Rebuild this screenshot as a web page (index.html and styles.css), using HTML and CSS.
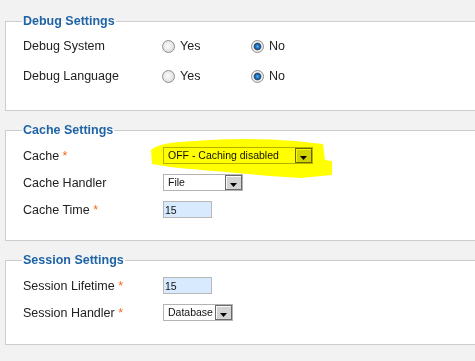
FILE: index.html
```html
<!DOCTYPE html>
<html>
<head>
<meta charset="utf-8">
<link rel="stylesheet" href="styles.css">
</head>
<body>
<div class="page">
  <fieldset class="panel panel-debug">
    <legend>Debug Settings</legend>
    <div class="row">
      <span class="label">Debug System</span>
      <div class="radios">
        <label class="opt"><input type="radio" name="debug_system">Yes</label>
        <label class="opt"><input type="radio" name="debug_system" checked>No</label>
      </div>
    </div>
    <div class="row">
      <span class="label">Debug Language</span>
      <div class="radios">
        <label class="opt"><input type="radio" name="debug_lang">Yes</label>
        <label class="opt"><input type="radio" name="debug_lang" checked>No</label>
      </div>
    </div>
  </fieldset>

  <fieldset class="panel panel-cache">
    <legend>Cache Settings</legend>
    <div class="row">
      <span class="label">Cache <span class="req">*</span></span>
      <div class="select select-cache"><span class="select-value">OFF - Caching disabled</span><span class="select-btn"><svg width="7" height="4" viewBox="0 0 7 4"><path d="M0 0H7L3.5 4Z"/></svg></span></div>
    </div>
    <div class="row">
      <span class="label">Cache Handler</span>
      <div class="select select-file"><span class="select-value">File</span><span class="select-btn"><svg width="7" height="4" viewBox="0 0 7 4"><path d="M0 0H7L3.5 4Z"/></svg></span></div>
    </div>
    <div class="row">
      <span class="label">Cache Time <span class="req">*</span></span>
      <input class="text" type="text" value="15">
    </div>
  </fieldset>

  <fieldset class="panel panel-session">
    <legend>Session Settings</legend>
    <div class="row">
      <span class="label">Session Lifetime <span class="req">*</span></span>
      <input class="text" type="text" value="15">
    </div>
    <div class="row">
      <span class="label">Session Handler <span class="req">*</span></span>
      <div class="select select-db"><span class="select-value">Database</span><span class="select-btn"><svg width="7" height="4" viewBox="0 0 7 4"><path d="M0 0H7L3.5 4Z"/></svg></span></div>
    </div>
  </fieldset>

  <svg class="highlight" width="475" height="361" viewBox="0 0 475 361">
    <path d="M151 150 C155 146 165 143 180 142 L210 140 C240 138 270 139 295 141 L323 144 L325 160 L332 161 L332 175 L300 178 L270 176 C240 173 200 170 170 167 L152 164 Z" fill="#ffff00"/>
  </svg>
</div>
</body>
</html>
```

FILE: styles.css
```css
html, body {
  margin: 0;
  padding: 0;
  background: #f2f2f2;
}

body {
  font-family: "Liberation Sans", Arial, sans-serif;
  color: #222;
}

.page {
  position: relative;
  padding-top: 14px;
  height: 361px;
  box-sizing: border-box;
  overflow: hidden;
}

.panel {
  margin: 0 0 12px 5px;
  border: 1px solid #cccccc;
  border-right: none;
  background: #fff;
  padding: 0 0 0 16px;
  min-width: 0;
}

.panel legend {
  padding: 0 1px;
  height: 15px;
  line-height: 15px;
  font-size: 12.5px;
  font-weight: bold;
  color: #1f64a6;
}

.panel-debug { padding-top: 2px; padding-bottom: 19px; }
.panel-cache { padding-top: 4px; padding-bottom: 17px; }
.panel-session { padding-top: 4px; padding-bottom: 18px; }

.row {
  display: grid;
  grid-template-columns: 140px auto;
  align-items: center;
  justify-items: start;
  height: 27px;
}

.panel-debug .row { height: 30px; }

.label {
  padding-left: 1px;
  font-size: 12.5px;
  white-space: nowrap;
}

.req {
  color: #f26a1f;
}

.radios {
  display: flex;
}

.opt {
  display: flex;
  align-items: center;
  width: 89px;
  font-size: 12.5px;
}

.opt input {
  appearance: none;
  -webkit-appearance: none;
  margin: 0 5px 0 0;
  width: 13px;
  height: 13px;
  border-radius: 50%;
  border: 1px solid #8f8f8f;
  box-sizing: border-box;
  background: radial-gradient(circle at 45% 45%, #fbfbfb 0, #e6e6e6 55%, #cfcfcf 100%);
}

.opt input:checked {
  background: radial-gradient(circle at 50% 50%, #5fb2f0 0, #1a6fc0 2px, #0e4f8f 3px, #6e6e6e 3.6px, #f3f3f3 4.3px, #d8d8d8 100%);
}

.select {
  display: flex;
  height: 17px;
  margin-left: 1px;
  box-sizing: border-box;
  border: 1px solid #b3b3b3;
  background: #fff;
}

.select-cache { width: 150px; }
.select-file { width: 80px; }
.select-db { width: 70px; }

.select-value {
  flex: 1;
  padding-left: 4px;
  font-size: 10.5px;
  line-height: 15px;
  color: #111;
  white-space: nowrap;
  overflow: hidden;
}

.select-btn {
  width: 17px;
  box-sizing: border-box;
  border: 1px solid #6a6a6a;
  background: #d3d3d3;
  box-shadow: inset 1px 1px 0 #fafafa;
  display: flex;
  justify-content: center;
  align-items: flex-end;
  padding-bottom: 2px;
}

.select-btn svg {
  display: block;
  fill: #000;
}

.text {
  width: 49px;
  height: 17px;
  box-sizing: border-box;
  margin: 0 0 0 1px;
  padding: 0 0 0 1px;
  border: 1px solid #b8b8b8;
  background: #d8ebfe;
  font-family: "Liberation Sans", Arial, sans-serif;
  font-size: 10.5px;
  color: #111;
  outline: none;
}

.highlight {
  position: absolute;
  top: 0;
  left: 0;
  pointer-events: none;
  mix-blend-mode: multiply;
}
```
